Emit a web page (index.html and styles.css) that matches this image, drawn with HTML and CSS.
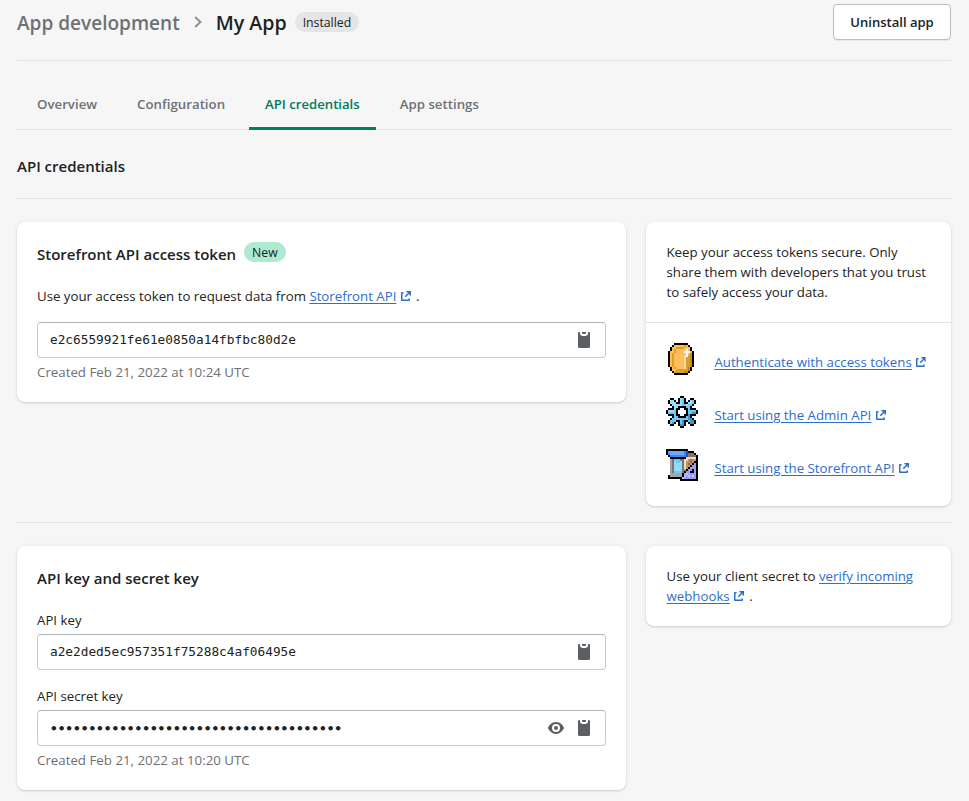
FILE: index.html
```html
<!DOCTYPE html>
<html lang="en">
<head>
<meta charset="utf-8">
<title>My App</title>
<link rel="stylesheet" href="styles.css">
</head>
<body>
<svg class="defs" aria-hidden="true">
  <symbol id="external" viewBox="5 5 10 10"><path d="M14 13v1a1 1 0 0 1-1 1H6c-.575 0-1-.484-1-1V7a1 1 0 0 1 1-1h1c1.037 0 1.04 1.5 0 1.5-.178.005-.353 0-.5 0v6h6V13c0-1 1.5-1 1.5 0zm-3.75-7.25A.75.75 0 0 1 11 5h4v4a.75.75 0 0 1-1.5 0V7.56l-3.22 3.22a.75.75 0 1 1-1.06-1.06l3.22-3.22H11a.75.75 0 0 1-.75-.75z"/></symbol>
  <symbol id="clipboard" viewBox="0 0 12 16"><path d="M0 1.2A1.2 1.2 0 0 1 1.2 0H2v1a3 3 0 0 0 3 3h2a3 3 0 0 0 3-3V0h.8A1.2 1.2 0 0 1 12 1.2v13.3a1.5 1.5 0 0 1-1.5 1.5h-9A1.5 1.5 0 0 1 0 14.5zM4 0h4v1a1 1 0 0 1-1 1H5a1 1 0 0 1-1-1z"/></symbol>
  <symbol id="eye" viewBox="0 0 16 12"><path fill-rule="evenodd" d="M15.93 5.63C15.9 5.55 13.57 0 8 0S.1 5.55.07 5.63a1 1 0 0 0 0 .74C.1 6.45 2.43 12 8 12s7.9-5.55 7.93-5.63a1 1 0 0 0 0-.74zM8 10a4 4 0 1 1 0-8 4 4 0 0 1 0 8zM8 4a2 2 0 1 0 0 4 2 2 0 0 0 0-4z"/></symbol>
</svg>
<header class="header">
  <div class="crumbs">
    <span class="parent">App development</span>
    <svg class="chevron" viewBox="0 0 8 12"><path d="M1.2 1 6.4 6 1.2 11"/></svg>
    <h1 class="title">My App</h1>
    <span class="badge">Installed</span>
  </div>
  <button class="button">Uninstall app</button>
</header>
<nav class="tabs">
  <a class="tab">Overview</a>
  <a class="tab">Configuration</a>
  <a class="tab active">API credentials</a>
  <a class="tab">App settings</a>
</nav>
<h2 class="section-title">API credentials</h2>
<main>
  <section class="row">
    <div class="card main-card">
      <div class="card-head"><h3>Storefront API access token</h3><span class="badge new">New</span></div>
      <p class="intro">Use your access token to request data from <a class="link">Storefront API</a><svg class="ext"><use href="#external"/></svg>.</p>
      <div class="field"><span class="mono">e2c6559921fe61e0850a14fbfbc80d2e</span><svg class="clip"><use href="#clipboard"/></svg></div>
      <p class="help">Created Feb 21, 2022 at 10:24 UTC</p>
    </div>
    <aside class="card side-card">
      <p class="side-text">Keep your access tokens secure. Only share them with developers that you trust to safely access your data.</p>
      <ul class="resources">
        <li><svg class="pixel" data-sprite="coin" viewBox="0 0 16 16"></svg><a class="link">Authenticate with access tokens</a><svg class="ext"><use href="#external"/></svg></li>
        <li><svg class="pixel" data-sprite="gear" viewBox="0 0 16 16"></svg><a class="link">Start using the Admin API</a><svg class="ext"><use href="#external"/></svg></li>
        <li><svg class="pixel" data-sprite="store" viewBox="0 0 16 16"></svg><a class="link">Start using the Storefront API</a><svg class="ext"><use href="#external"/></svg></li>
      </ul>
    </aside>
  </section>
  <section class="row divided">
    <div class="card main-card">
      <div class="card-head"><h3>API key and secret key</h3></div>
      <p class="label first">API key</p>
      <div class="field"><span class="mono">a2e2ded5ec957351f75288c4af06495e</span><svg class="clip"><use href="#clipboard"/></svg></div>
      <p class="label">API secret key</p>
      <div class="field"><span class="mono dots">••••••••••••••••••••••••••••••••••••••</span><svg class="eye"><use href="#eye"/></svg><svg class="clip"><use href="#clipboard"/></svg></div>
      <p class="help">Created Feb 21, 2022 at 10:20 UTC</p>
    </div>
    <aside class="card side-card">
      <p class="side-text">Use your client secret to <a class="link">verify incoming webhooks</a><svg class="ext"><use href="#external"/></svg>.</p>
    </aside>
  </section>
</main>
<script src="sprites.js"></script>
</body>
</html>
```
FILE: styles.css
```css
* { box-sizing: border-box; }
body {
  margin: 0;
  padding: 0 18px 0 17px;
  height: 801px;
  overflow: hidden;
  background: #f6f6f7;
  color: #202223;
  font: 13.25px/20px "Open Sans", sans-serif;
}
h1, h2, h3, p, ul { margin: 0; padding: 0; }
h1, h2, h3 { font-weight: 600; }
.defs { display: none; }

.header {
  display: flex;
  justify-content: space-between;
  align-items: flex-start;
  height: 61px;
  padding-top: 4px;
  border-bottom: 1px solid #e1e3e5;
}
.crumbs { display: flex; align-items: center; height: 38px; }
.parent { color: #6d7175; font-size: 19.05px; line-height: 28px; font-weight: 600; }
.title { font-size: 19.6px; line-height: 28px; }
.chevron { width: 8px; height: 12px; margin: 0 14px 2px; fill: none; stroke: #8c9196; stroke-width: 2; }
.badge {
  height: 20px;
  margin: 0 0 2px 8px;
  padding: 1px 8px 0;
  border-radius: 10px;
  background: #e4e5e7;
  font-size: 12.25px;
  line-height: 20px;
}
.badge.new { margin: 0 0 4px; background: #aee9d1; }
.button {
  width: 118px;
  height: 36px;
  padding: 0;
  border: 1px solid #babfc3;
  border-radius: 4px;
  background: #fff;
  box-shadow: 0 1px 0 rgba(0, 0, 0, .05);
  color: #202223;
  font: 600 13.05px/20px "Open Sans", sans-serif;
}

.tabs { display: flex; height: 69px; padding-left: 4px; border-bottom: 1px solid #e1e3e5; }
.tab {
  height: 69px;
  margin-right: 8px;
  padding: 33px 16px 0;
  color: #6d7175;
  font-size: 13.25px;
  font-weight: 600;
}
.tab.active { border-bottom: 3px solid #008060; border-radius: 2px 2px 0 0; color: #007a5c; font-size: 13.15px; }
.section-title { height: 69px; padding-top: 24px; border-bottom: 1px solid #e1e3e5; font-size: 15px; line-height: 24px; }

.row { display: grid; grid-template-columns: 609px 305px; justify-content: space-between; align-items: start; padding: 23px 0 16px; }
.row.divided { border-top: 1px solid #e1e3e5; }
.card {
  border-radius: 8px;
  background: #fff;
  box-shadow: 0 0 5px rgba(23, 24, 24, .05), 0 1px 2px rgba(0, 0, 0, .15);
}
.main-card { padding: 20px; }
.card-head { display: flex; align-items: center; gap: 8px; height: 24px; margin-bottom: 20px; }
.card-head h3 { font-size: 15px; line-height: 24px; }
.link { color: #2c6ecb; text-decoration: underline; text-underline-offset: 2px; text-decoration-thickness: 1px; }
.ext { width: 10px; height: 10px; margin: 0 5px 0 4.5px; fill: #2c6ecb; }
.field {
  display: flex;
  align-items: center;
  height: 36px;
  margin-top: 4px;
  padding: 0 15px 0 12px;
  border: 1px solid #c9cccf;
  border-top-color: #aeb4b9;
  border-radius: 4px;
}
.intro + .field { margin-top: 16px; }
.mono { flex: 1; font-family: "DejaVu Sans Mono", monospace; font-size: 12.78px; }
.dots { padding-top: 1px; font-weight: 700; }
.clip { width: 12px; height: 16px; fill: #5c5f62; }
.eye { width: 16px; height: 12px; margin-right: 14px; fill: #5c5f62; }
.help { margin-top: 4px; color: #6d7175; font-size: 13.3px; }
.label { margin-top: 16px; }
.label.first { margin-top: 0; }

.side-text { padding: 20px 20px 20px 20.5px; }
.resources { padding: 20px; border-top: 1px solid #e1e3e5; list-style: none; }
.resources li { display: flex; align-items: center; height: 37px; margin-bottom: 16px; }
.resources li:last-child { margin-bottom: 0; }
.resources .link { white-space: nowrap; }
.pixel { flex: none; width: 32px; height: 32px; margin: 0 16.4px 5px 0; shape-rendering: crispEdges; }
```
FILE: sprites.js
```
// Pixel-art icons: one letter per 2px cell, '.' is transparent.
const palettes = {
  coin: { B: '#000', g: '#dd9f25', l: '#ffbe5c', d: '#c58a0c', p: '#ffdca6', w: '#fff' },
  gear: { B: '#000', l: '#9cdcff', c: '#6cc8f7', d: '#3a95c4' },
  store: { B: '#000', b: '#3f86f5', a: '#6fa8ff', n: '#1f4fb4', g: '#a5a5a5', h: '#777', c: '#65cdf5', k: '#8fdcfb', e: '#f0dcb8', t: '#b99366', r: '#8f7060', v: '#9c9cf5', u: '#c0c4ff' }
};
const sprites = {
  coin: [
    '....BBBBBBB.....',
    '...BlllllglB....',
    '..BllgggglllB...',
    '..BlglllllwlB...',
    '.BllgllllwwwlB..',
    '.BlgllllllwldB..',
    '.BlglllllpwgdB..',
    '.BlglllllpggdB..',
    '.BlglllllpggdB..',
    '.BlglllllpggdB..',
    '.BlglllllpggdB..',
    '.BlglllllpggdB..',
    '..BlgllllpgdB...',
    '..BllggggggdB...',
    '...BgggggddB....',
    '....BBBBBBB.....'
  ],
  gear: [
    '.......BB.......',
    '..BB..BlcB..BB..',
    '.BllB.BlcB.BlcB.',
    '.BlllBBlcBBllcB.',
    '..BlllllcclccB..',
    '...BllBBBBccB...',
    '.BBBlBB..BBcBBB.',
    'BlllcB....BccccB',
    'BccccB....BccddB',
    '.BBBcBB..BBdBBB.',
    '...BccBBBBcdB...',
    '..BccccccccddB..',
    '.BcccBBcdBBcddB.',
    '.BcdB.BcdB.BddB.',
    '..BB..BddB..BB..',
    '.......BB.......'
  ],
  store: [
    'BBBBBBBBBBB.....',
    'BaaaaaaaabnBBB..',
    'BbaaaaaaabnrrrB.',
    '.BbbbbbbbbnrrrrB',
    '..BBBBBBBBeeeeeB',
    '..ghccchheetrttB',
    '..ghkcckhettrtBB',
    '..ghkkkkhetrtBvB',
    '..ghkkkkhettBvvB',
    '..ghkkkkhetBvvvB',
    '..ghkkkkhtBvvBvB',
    '..ghcccchBvvBBvB',
    '..ggggggBvuvvvvB',
    '.BggggggBuvuvuvB',
    '.BBBBBBBuvvvvvvB',
    '.......BBBBBBBBB'
  ]
};
for (const svg of document.querySelectorAll('.pixel')) {
  const name = svg.dataset.sprite;
  svg.innerHTML = sprites[name].map((row, y) => [...row].map((cell, x) =>
    cell === '.' ? '' : `<rect x="${x}" y="${y}" width="1" height="1" fill="${palettes[name][cell]}"/>`
  ).join('')).join('');
}
```
